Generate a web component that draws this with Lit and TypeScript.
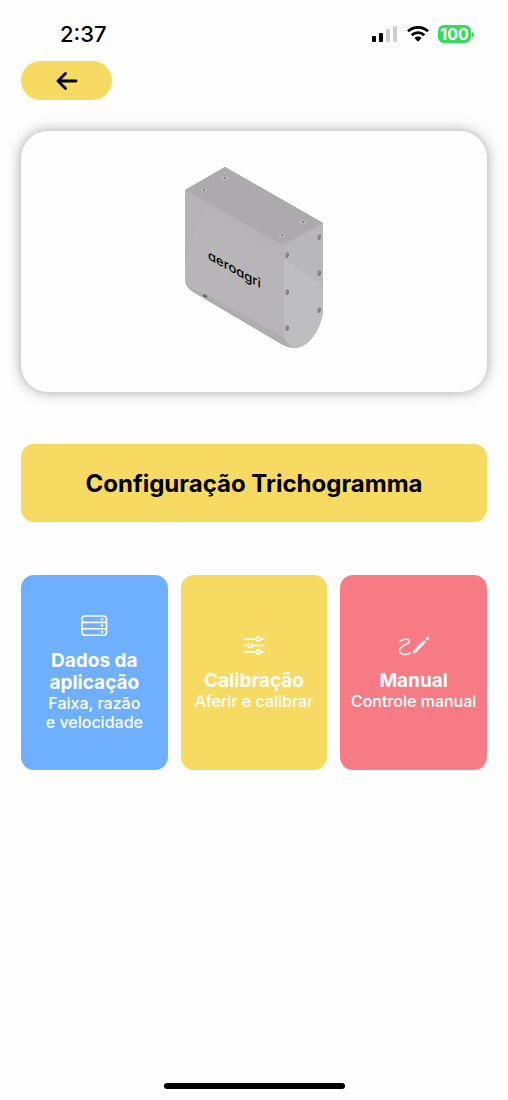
import { LitElement, html, css, svg } from "lit";
import { customElement, property } from "lit/decorators.js";

@customElement("status-bar")
class StatusBar extends LitElement {
  static styles = css`
    :host {
      display: flex;
      justify-content: space-between;
      align-items: center;
      height: 26px;
      padding: 21px 34px 14px 60px;
    }
    .time {
      font-size: 22px;
      line-height: 26px;
      font-weight: 500;
    }
    .indicators {
      display: flex;
      align-items: center;
      gap: 9px;
    }
    .battery {
      display: flex;
      align-items: center;
      gap: 1px;
    }
    .level {
      width: 33px;
      border-radius: 6px;
      background: #35dc5c;
      color: #fff;
      font-size: 16px;
      line-height: 18px;
      font-weight: 700;
      text-align: center;
    }
    .tip {
      width: 2px;
      height: 5px;
      border-radius: 0 2px 2px 0;
      background: #35dc5c;
    }
    svg {
      display: block;
    }
  `;

  render() {
    return html`
      <span class="time">2:37</span>
      <div class="indicators">
        <svg width="26" height="18" viewBox="0 0 26 18" aria-hidden="true">
          <rect x="0" y="11" width="4" height="6" rx="1" />
          <rect x="7" y="8" width="4" height="9" rx="1" />
          <rect x="14" y="4" width="4" height="13" rx="1" fill="#cfcdd0" />
          <rect x="21" y="1" width="4" height="16" rx="1" fill="#cfcdd0" />
        </svg>
        <svg width="22" height="18" viewBox="0 0 22 18" aria-hidden="true">
          <g fill="none" stroke="#000" stroke-width="2.8">
            <path d="M1 6.3a14.5 14.5 0 0 1 20 0" />
            <path d="M4.7 10.2a9 9 0 0 1 12.6 0" />
          </g>
          <path d="M7.4 13a5.2 5.2 0 0 1 7.2 0L11 16.8z" />
        </svg>
        <div class="battery">
          <span class="level">100</span>
          <span class="tip"></span>
        </div>
      </div>
    `;
  }
}

@customElement("device-picture")
class DevicePicture extends LitElement {
  static styles = css`
    :host {
      display: block;
    }
    svg {
      display: block;
    }
    .brand {
      font-family: Inter, sans-serif;
      font-size: 13px;
      font-weight: 500;
      font-feature-settings: "cv11";
    }
  `;

  private topScrews = [[41, 12], [20, 24], [98, 69], [119, 56]];
  private sideScrews = [[103, 89], [103, 126], [103, 162], [135, 71], [135, 107], [135, 144]];

  render() {
    return html`
      <svg width="140" height="182" viewBox="0 0 140 182" role="img" aria-label="aeroagri">
        <path d="M1 24 41 1 139 57V141C139 162 124 182 111 182Q104 182 97 178L9 126Q1 121 1 113Z" fill="#a9a7aa" />
        <path d="M1 24 41 1 139 57 99 79Z" fill="#acaaad" />
        <path d="M1 24 99 79V168Q99 176 103 180L97 177 9 124Q1 119 1 111Z" fill="#b5b3b6" />
        <path d="M1 97 19 44 99 89V168L97 177 9 124Q1 119 1 111Z" fill="#b7b5b8" />
        <path d="M99 79 139 57V141C139 162 124 182 111 182Q99 180 99 168Z" fill="#b8b7b9" />
        <path d="M99 93 139 119V141C139 162 124 182 111 182Q99 180 99 168Z" fill="#bebdbf" />
        <path d="M9 124 97 177 108 182 98 170 20 127Z" fill="#aaa8ab" opacity=".6" />
        <path d="M99 80V168Q99 177 106 181" fill="none" stroke="#aeacaf" />
        <path d="M19 129 23 131" stroke="#646266" stroke-width="2" />
        ${this.topScrews.map(
          ([x, y]) => svg`
            <ellipse cx=${x} cy=${y} rx="3" ry="1.6" fill="#c5c3c6" />
            <ellipse cx=${x} cy=${y} rx="1.3" ry="0.9" fill="#7c7a7e" />`
        )}
        ${this.sideScrews.map(
          ([x, y]) => svg`
            <ellipse cx=${x} cy=${y} rx="2" ry="2.8" fill="#98969a" />
            <path d="M${x + 1} ${y - 2}v3l-2 2" fill="none" stroke="#67656a" />`
        )}
        <text class="brand" transform="translate(24 93) skewY(29)">aeroagri</text>
      </svg>
    `;
  }
}

@customElement("option-card")
class OptionCard extends LitElement {
  @property() icon = "";
  @property() heading = "";
  @property() detail = "";
  @property({ reflect: true }) tone = "";

  static styles = css`
    :host {
      display: flex;
      min-width: 0;
    }
    .card {
      flex: 1;
      min-width: 0;
      min-height: 195px;
      padding: 1px 8px 0;
      border: 0;
      border-radius: 13px;
      display: flex;
      flex-direction: column;
      align-items: center;
      justify-content: center;
      font-family: inherit;
      color: #fff;
      background: #6eaffe;
      cursor: pointer;
    }
    :host([tone="yellow"]) .card {
      background: #f6da61;
    }
    :host([tone="red"]) .card {
      background: #f67b84;
    }
    svg {
      display: block;
      margin-bottom: 13px;
    }
    .heading {
      font-size: 19px;
      line-height: 22px;
      font-weight: 700;
      white-space: pre-line;
    }
    .detail {
      font-size: 16px;
      line-height: 19px;
      font-weight: 500;
      white-space: pre-line;
    }
  `;

  private glyphs: Record<string, unknown> = {
    rack: svg`
      <g fill="none" stroke="#fff" stroke-width="1.6">
        <rect x="4" y="1" width="24.5" height="19.2" rx="3" />
        <path d="M4 7.4h24.5M4 13.8h24.5" />
      </g>
      <g fill="#fff">
        <circle cx="24" cy="4.3" r="1.3" />
        <circle cx="24" cy="10.6" r="1.3" />
        <circle cx="24" cy="17" r="1.3" />
      </g>`,
    sliders: svg`
      <g fill="none" stroke="#fff" stroke-width="1.5" stroke-linecap="round">
        <path d="M6 4h12.2M22.8 4H26M6 10.5h4.2M14.8 10.5H26M6 17h12.2M22.8 17H26" />
        <circle cx="20.5" cy="4" r="2.1" />
        <circle cx="12.5" cy="10.5" r="2.1" />
        <circle cx="20.5" cy="17" r="2.1" />
      </g>`,
    scribble: svg`
      <path d="M1.5 6.500C4 4 11 3 11.500 6C12 9.500 1.500 10 1.500 15.500C2 20.500 9 20 12.500 18" fill="none" stroke="#fff" stroke-width="1.5" stroke-linecap="round" />
      <path d="M17 16.200 27 6" fill="none" stroke="#fff" stroke-width="3" />
      <path d="M16 15 18.200 17.300 15.300 18.200Z" fill="#fff" stroke="#fff" stroke-width=".5" stroke-linejoin="round" />
      <path d="M29.200 3.700 29.700 3.200" stroke="#fff" stroke-width="3" stroke-linecap="round" />`,
  };

  render() {
    return html`
      <button class="card" type="button">
        <svg width="32" height="22" viewBox="0 0 32 22" aria-hidden="true">${this.glyphs[this.icon]}</svg>
        <span class="heading">${this.heading}</span>
        <span class="detail">${this.detail}</span>
      </button>
    `;
  }
}

@customElement("app-root")
class AppRoot extends LitElement {
  static styles = css`
    :host {
      display: flex;
      flex-direction: column;
      box-sizing: border-box;
      min-height: 100vh;
      background: #fdfdfd;
      color: #000;
      font-family: Inter, "Noto Sans", sans-serif;
    }
    main {
      display: flex;
      flex-direction: column;
      padding: 0 21px;
    }
    .back {
      align-self: flex-start;
      width: 91px;
      height: 39px;
      padding: 0;
      border: 0;
      border-radius: 20px;
      background: #f6da61;
      display: grid;
      place-items: center;
      cursor: pointer;
    }
    .preview {
      display: flex;
      justify-content: center;
      margin-top: 31px;
      padding: 35px 0 44px;
      border-radius: 27px;
      background: #fefefe;
      box-shadow: 0 0 13px rgba(0, 0, 0, 0.36);
    }
    .title {
      margin: 52px 0 0;
      padding: 25px 12px 23px;
      border-radius: 13px;
      background: #f6da61;
      font-size: 24px;
      line-height: 30px;
      font-weight: 700;
      text-align: center;
    }
    .options {
      display: grid;
      grid-template-columns: repeat(3, minmax(0, 1fr));
      gap: 13px;
      margin-top: 53px;
    }
    .home {
      align-self: center;
      width: 181px;
      height: 6px;
      margin-top: auto;
      margin-bottom: 11px;
      border-radius: 3px;
      background: #000;
    }
  `;

  render() {
    return html`
      <status-bar></status-bar>
      <main>
        <button class="back" type="button" aria-label="Voltar">
          <svg width="22" height="18" viewBox="0 0 22 18" aria-hidden="true">
            <path d="M9.500 1.500 2 9l7.500 7.500M2.500 9H20" fill="none" stroke="#000" stroke-width="2.8" stroke-linecap="round" stroke-linejoin="round" />
          </svg>
        </button>
        <section class="preview"><device-picture></device-picture></section>
        <h1 class="title">Configuração Trichogramma</h1>
        <nav class="options">
          <option-card icon="rack" tone="blue" .heading=${"Dados da\naplicação"} .detail=${"Faixa, razão\ne velocidade"}></option-card>
          <option-card icon="sliders" tone="yellow" heading="Calibração" detail="Aferir e calibrar"></option-card>
          <option-card icon="scribble" tone="red" heading="Manual" detail="Controle manual"></option-card>
        </nav>
      </main>
      <div class="home"></div>
    `;
  }
}
